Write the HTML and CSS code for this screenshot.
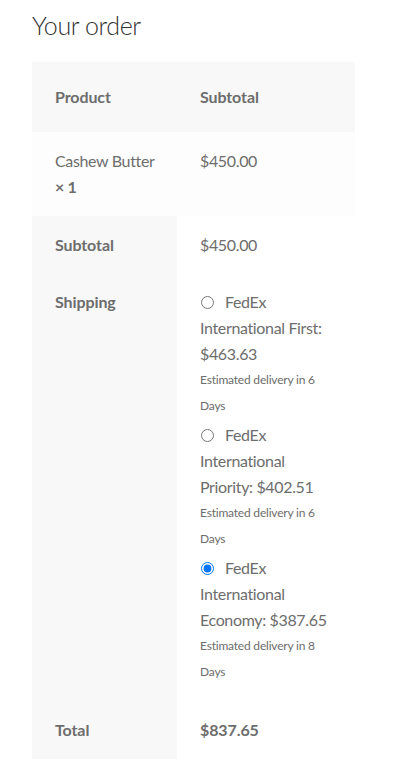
FILE: index.html
```html
<!DOCTYPE html>
<html lang="en">
<head>
<meta charset="utf-8">
<title>Your order</title>
<link rel="stylesheet" href="styles.css">
</head>
<body>
<div class="wrap">
  <h3 class="title">Your order</h3>
  <table class="order">
    <thead>
      <tr>
        <th class="c1">Product</th>
        <th class="c2">Subtotal</th>
      </tr>
    </thead>
    <tbody>
      <tr class="item">
        <td class="c1">Cashew Butter <strong class="qty">×&nbsp;1</strong></td>
        <td class="c2">$450.00</td>
      </tr>
    </tbody>
    <tfoot>
      <tr>
        <th class="c1">Subtotal</th>
        <td class="c2">$450.00</td>
      </tr>
      <tr>
        <th class="c1">Shipping</th>
        <td class="c2">
          <ul class="methods">
            <li>
              <input type="radio" name="ship" id="s1"><label for="s1">FedEx International First: $463.63</label>
              <div class="eta">Estimated delivery in 6 Days</div>
            </li>
            <li>
              <input type="radio" name="ship" id="s2"><label for="s2">FedEx International Priority: $402.51</label>
              <div class="eta">Estimated delivery in 6 Days</div>
            </li>
            <li>
              <input type="radio" name="ship" id="s3" checked><label for="s3">FedEx International Economy: $387.65</label>
              <div class="eta">Estimated delivery in 8 Days</div>
            </li>
          </ul>
        </td>
      </tr>
      <tr>
        <th class="c1">Total</th>
        <td class="c2 strong">$837.65</td>
      </tr>
    </tfoot>
  </table>
</div>
</body>
</html>
```
FILE: styles.css
```css
html, body {
  margin: 0;
  padding: 0;
  background: #ffffff;
}
body {
  font-family: "Lato", "Liberation Sans", sans-serif;
  font-size: 16px;
  line-height: 26px;
  color: #6d6d6d;
  letter-spacing: -0.35px;
}
.wrap {
  padding: 0 0 0 32px;
}
.title {
  margin: 0;
  padding-top: 8px;
  height: 62px;
  box-sizing: border-box;
  font-size: 25px;
  line-height: 34px;
  font-weight: 300;
  letter-spacing: -0.4px;
  color: #333333;
}
.order {
  width: 323px;
  border-collapse: collapse;
  border-spacing: 0;
  table-layout: fixed;
}
.order th, .order td {
  box-sizing: border-box;
  padding: 15.5px 22px 16px 23px;
  text-align: left;
  vertical-align: top;
}
.order .c1 { width: 145px; }
.order th {
  font-weight: 700;
  letter-spacing: -0.1px;
  background: #f8f8f8;
}
.order thead th {
  padding-top: 22px;
  padding-bottom: 22px;
  vertical-align: middle;
}
.order tbody td {
  padding-top: 16px;
  background: #fdfdfd;
}
.order tfoot td {
  background: #ffffff;
}
.qty {
  font-weight: 700;
}
.strong {
  font-weight: 700;
  letter-spacing: -0.1px;
}
.methods {
  list-style: none;
  margin: 0;
  padding: 0;
  display: flex;
  flex-direction: column;
  gap: 3px;
}
.methods input {
  margin: 0 11px 0 1px;
  width: 13px;
  height: 13px;
  vertical-align: -1px;
}
.eta {
  font-size: 12px;
  line-height: 26px;
  letter-spacing: -0.2px;
}
```
